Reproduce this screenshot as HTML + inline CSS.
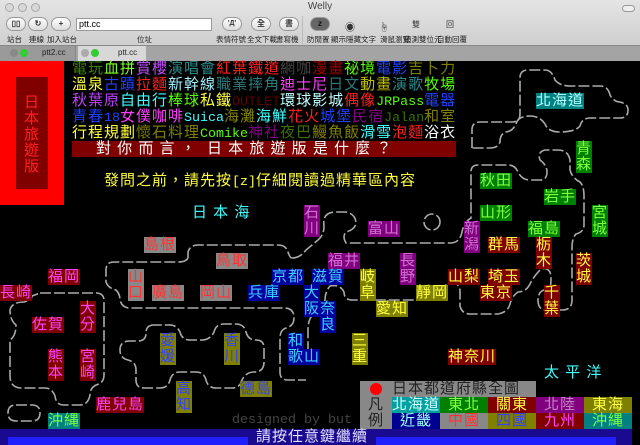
<!DOCTYPE html>
<html><head><meta charset="utf-8">
<style>
*{margin:0;padding:0;box-sizing:border-box}
body{width:640px;height:445px;overflow:hidden;background:#000;font-family:"Liberation Sans","Noto Sans CJK TC",sans-serif;position:relative}
#chrome{position:absolute;left:0;top:0;width:640px;height:61px;background:linear-gradient(#e4e4e4,#c8c8c8)}
.tl{position:absolute;top:3px;width:9px;height:9px;border-radius:50%;background:#d8d8d8;border:1px solid #a8a8a8}
.btn{position:absolute;top:17px;width:20px;height:14px;border-radius:7px;background:linear-gradient(#fff,#ddd);border:1px solid #999;font-size:8px;line-height:12px;text-align:center;color:#333;font-weight:bold}
.lb{position:absolute;top:34px;font-size:7.5px;color:#222;font-family:"Noto Sans CJK TC",sans-serif;white-space:nowrap}
.ic{position:absolute;top:19px;font-size:10px;color:#333}
#tabs{position:absolute;left:0;top:45px;width:640px;height:16px;background:#a4a4a4;border-top:1px solid #888}
.t{position:absolute;height:16px;line-height:16px;font-size:15px;letter-spacing:1px;white-space:pre;font-family:"Liberation Sans","Noto Sans CJK TC",sans-serif}
.m{font-family:"Liberation Mono",monospace;font-size:13.33px;letter-spacing:0}
.v{width:16px;height:32px}
.gr{background:#888;color:#ff3333}.pu{background:#800080;color:#d070d0}.nv{background:#0000a0;color:#40d0ff}
.ol{background:#808000;color:#ffff40}.ob{background:#808000;color:#3040ff}.dr{background:#800000;color:#ffff40}
.dm{background:#800000;color:#ff40ff}.gn{background:#008000;color:#80ff40}.tl2{background:#008080;color:#80ff40}
</style></head><body>
<div id="chrome">
 <div class="tl" style="left:5px"></div><div class="tl" style="left:18px"></div><div class="tl" style="left:31px"></div>
 <div style="position:absolute;left:0;width:640px;top:1px;text-align:center;font-size:10px;color:#444">Welly</div>
 <div style="position:absolute;left:622px;top:5px;width:13px;height:7px;border-radius:4px;border:1px solid #999;background:#eee"></div>
 <div class="btn" style="left:6px">▯▯</div><div class="btn" style="left:28px">↻</div><div class="btn" style="left:51px">+</div>
 <div class="lb" style="left:7px">站台</div><div class="lb" style="left:29px">連線</div><div class="lb" style="left:47px">加入站台</div>
 <div style="position:absolute;left:76px;top:18px;width:136px;height:13px;background:#fff;border:1px solid #999;font-size:9px;line-height:11px;padding-left:2px">ptt.cc</div>
 <div class="lb" style="left:137px">位址</div>
 <div class="btn" style="left:222px;font-size:7px">'Д'</div><div class="btn" style="left:251px">全</div><div class="btn" style="left:279px">書</div>
 <div class="lb" style="left:216px">表情符號</div><div class="lb" style="left:247px">全文下載</div><div class="lb" style="left:276px">書寫機</div>
 <div style="position:absolute;left:302px;top:16px;width:1px;height:28px;background:#bbb"></div>
 <div class="btn" style="left:310px;background:#666;color:#111">z</div>
 <div class="ic" style="left:345px">◉</div><div class="ic" style="left:379px">☝</div><div class="ic" style="left:412px;font-size:8px">雙</div><div class="ic" style="left:446px;font-size:8px">回</div>
 <div class="lb" style="left:307px">防閒置</div><div class="lb" style="left:331px">顯示隱藏文字</div><div class="lb" style="left:380px">滑鼠瀏覽</div><div class="lb" style="left:404px">偵測雙位元</div><div class="lb" style="left:437px">自動回覆</div>
</div>
<div id="tabs">
 <div style="position:absolute;left:0;top:0;width:76px;height:15px;background:#9a9a9a;border-right:1px solid #888"></div>
 <div style="position:absolute;left:78px;top:0;width:68px;height:15px;background:#d8d8d8"></div>
 <div style="position:absolute;left:10px;top:3px;width:8px;height:8px;border-radius:50%;background:#888"></div>
 <div style="position:absolute;left:20px;top:3px;width:8px;height:8px;border-radius:50%;background:#3c3"></div>
 <div style="position:absolute;left:81px;top:3px;width:8px;height:8px;border-radius:50%;background:#aaa"></div>
 <div style="position:absolute;left:91px;top:3px;width:8px;height:8px;border-radius:50%;background:#3c3"></div>
 <div style="position:absolute;left:42px;top:2px;font-size:8px;color:#222">ptt2.cc</div>
 <div style="position:absolute;left:118px;top:2px;font-size:8px;color:#222">ptt.cc</div>
</div>

<div style="position:absolute;left:0;top:61px;width:64px;height:144px;background:#ff0000"></div>
<div style="position:absolute;left:16px;top:77px;width:32px;height:112px;background:#800000"></div>
<div class="t" style="left:24px;top:95px;width:16px;line-height:16px;color:#ff2020;white-space:normal">日本旅遊版</div>

<div class="t" style="left:72px;top:61px"><span style="color:#3a8000">電玩</span><span style="color:#80ff20">血拼</span><span style="color:#c050ff">賞櫻</span><span style="color:#2a8a8a">演唱會</span><span style="color:#ff2020">紅葉鐵道</span><span style="color:#444">網咖</span><span style="color:#a00000">漫畫</span><span style="color:#55ff00">祕境</span><span style="color:#2040ff">電影</span><span style="color:#808000">吉卜力</span></div>
<div class="t" style="left:72px;top:77px"><span style="color:#ffff40">溫泉</span><span style="color:#2040ff">古蹟</span><span style="color:#ff2020">拉麵</span><span style="color:#a0f0ff">新幹線</span><span style="color:#2a7a7a">職業摔角</span><span style="color:#ff40ff">迪士尼</span><span style="color:#2a7a7a">日文</span><span style="color:#c0c000">動畫</span><span style="color:#2a8a8a">演歌</span><span style="color:#55ff00">牧場</span></div>
<div class="t" style="left:72px;top:93px"><span style="color:#c040ff">秋葉原</span><span style="color:#40ffff">自由行</span><span style="color:#55ff00">棒球</span><span style="color:#ffff40">私鐵</span><span class="m" style="color:#600000">OUTLET</span><span style="color:#c0ffff">環球影城</span><span style="color:#ff2020">偶像</span><span class="m" style="color:#55ff00">JRPass</span><span style="color:#2040ff">電器</span></div>
<div class="t" style="left:72px;top:109px"><span style="color:#2040ff">青春</span><span class="m" style="color:#2040ff">18</span><span style="color:#ff40ff">女僕咖啡</span><span class="m" style="color:#40ffff">Suica</span><span style="color:#808000">海灘</span><span style="color:#40ffff">海鮮</span><span style="color:#ff2020">花火</span><span style="color:#2040ff">城堡</span><span style="color:#800080">民宿</span><span class="m" style="color:#3a7000">Jalan</span><span style="color:#808000">和室</span></div>
<div class="t" style="left:72px;top:125px"><span style="color:#ffff40">行程規劃</span><span style="color:#808000">懷石料理</span><span class="m" style="color:#55ff00">Comike</span><span style="color:#800080">神社</span><span style="color:#3a7000">夜巴</span><span style="color:#808000">鰻魚飯</span><span style="color:#40ffff">滑雪</span><span style="color:#ff2020">泡麵</span><span style="color:#fff">浴衣</span></div>
<div class="t" style="left:72px;top:141px;width:384px;background:#800000;color:#fff;padding-left:24px">對 你 而 言 ，  日 本 旅 遊 版 是 什 麼 ？</div>
<div class="t" style="left:104px;top:173px;color:#ffff40">發問之前，請先按<span class="m">[z]</span>仔細閱讀過精華區內容</div>
<div class="t" style="left:192px;top:205px;color:#40ffff">日 本 海</div>
<div class="t" style="left:544px;top:365px;color:#40ffff">太 平 洋</div>
<div class="t m" style="left:232px;top:413px;color:#444">designed by but</div>

<svg style="position:absolute;left:0;top:0" width="640" height="445" fill="none" stroke="#aaa" stroke-width="1.6" stroke-dasharray="11 3">
<path d="M472,148 L472,130 Q472,122 480,122 L512,122 Q520,122 520,114 L520,78 Q520,70 528,70 L545,70 Q552,70 555,80 Q560,86 570,86 L600,86 Q608,86 610,95 Q614,102 620,102 Q628,104 628,110 Q628,118 620,118 L590,118 Q582,118 580,126 Q575,132 560,132 Q548,132 545,124 Q540,116 530,116 Q518,116 516,124 Q512,132 505,132 Q500,135 500,142 Q498,148 490,148 Z"/>
<path d="M292,258 Q300,258 306,250 L318,240 Q324,235 324,226 Q322,212 336,212 L346,212 Q356,214 356,224 Q354,230 346,232 Q342,236 346,243 L450,243 Q460,243 462,232 Q464,222 471,218 L471,172 Q471,165 478,165 L508,165 Q515,165 518,172 Q522,180 530,180 L540,180 Q547,180 547,172 Q547,165 540,160 Q537,152 545,150 L558,150 Q568,150 570,160 L570,170 Q572,178 580,182 Q584,186 584,196 L584,225 Q584,232 576,234 Q572,238 572,248 L572,300 Q572,310 562,310 L546,310 Q538,310 538,300 Q538,292 544,290 L550,288 Q552,280 550,272 Q546,266 540,270 Q534,276 530,284 Q526,292 518,292 Q512,296 510,304 Q508,312 498,314 L470,314 Q462,314 460,306 L460,290 Q458,282 450,282 Q444,284 444,292 Q442,300 432,300 L352,300 Q344,300 344,292 Q340,284 330,286 Q325,292 325,300 Q322,312 314,314 Q308,318 308,330 L308,360"/>
<path d="M188,258 L188,252 Q190,245 198,245 L278,245 Q286,245 288,252 Q290,258 292,258"/>
<path d="M188,258 Q186,262 178,262 L114,262 Q106,262 106,270 L106,282 Q108,288 116,290 Q120,294 120,300 Q122,308 130,308 L284,308 Q294,308 294,318 Q294,326 286,328 Q280,330 280,338 L280,372 Q280,380 288,380 L306,380"/>
<circle cx="432" cy="222" r="8"/>
<path d="M40,293 L96,293 Q104,293 104,301 L104,375 Q104,383 96,385 Q90,388 90,395 Q88,405 80,405 L64,405 Q56,405 55,396 Q52,388 45,388 L22,388 Q10,388 10,376 L10,340 Q16,336 16,325 Q10,320 10,310 Q12,302 24,302 Q32,300 32,296 Z"/>
<path d="M16,405 L32,405 Q40,405 40,413 Q40,421 32,421 L16,421 Q8,421 8,413 Q8,405 16,405 Z"/>
<path d="M154,325 Q146,325 146,333 Q146,341 138,341 L130,341 Q120,341 120,350 Q120,358 128,360 Q136,362 136,370 L136,380 Q136,388 144,388 L160,388 Q168,388 170,380 Q172,372 180,372 L196,372 Q204,372 206,380 Q208,388 216,388 L232,388 Q240,388 242,380 Q246,372 254,372 Q264,372 264,362 L264,348 Q264,340 256,340 Q248,340 246,332 Q244,324 236,324 L224,324 Q216,324 214,332 Q210,340 202,340 L190,340 Q182,340 180,332 Q176,324 168,325 Z"/>
</svg>

<div class="t gn" style="left:536px;top:93px;background:#008080;color:#b0ffff">北海道</div>
<div class="t v gn" style="left:576px;top:141px">青<br>森</div>
<div class="t gn" style="left:480px;top:173px">秋田</div>
<div class="t gn" style="left:544px;top:189px">岩手</div>
<div class="t gn" style="left:480px;top:205px">山形</div>
<div class="t v gn" style="left:592px;top:205px">宮<br>城</div>
<div class="t gn" style="left:528px;top:221px">福島</div>
<div class="t v pu" style="left:464px;top:221px">新<br>潟</div>
<div class="t v pu" style="left:304px;top:205px">石<br>川</div>
<div class="t pu" style="left:368px;top:221px">富山</div>
<div class="t dr" style="left:488px;top:237px">群馬</div>
<div class="t v dr" style="left:536px;top:237px">栃<br>木</div>
<div class="t v dr" style="left:576px;top:253px">茨<br>城</div>
<div class="t gr" style="left:144px;top:237px">島根</div>
<div class="t gr" style="left:216px;top:253px">鳥取</div>
<div class="t pu" style="left:328px;top:253px">福井</div>
<div class="t v pu" style="left:400px;top:253px">長<br>野</div>
<div class="t v gr" style="left:128px;top:269px">山<br>口</div>
<div class="t nv" style="left:272px;top:269px">京都</div>
<div class="t nv" style="left:312px;top:269px">滋賀</div>
<div class="t v ol" style="left:360px;top:269px">岐<br>阜</div>
<div class="t dr" style="left:448px;top:269px">山梨</div>
<div class="t dr" style="left:488px;top:269px">埼玉</div>
<div class="t dm" style="left:48px;top:269px">福岡</div>
<div class="t dm" style="left:0px;top:285px">長崎</div>
<div class="t gr" style="left:152px;top:285px">廣島</div>
<div class="t gr" style="left:200px;top:285px">岡山</div>
<div class="t nv" style="left:248px;top:285px">兵庫</div>
<div class="t v nv" style="left:304px;top:285px">大<br>阪</div>
<div class="t nv" style="left:320px;top:301px;width:16px;height:32px">奈<br>良</div>
<div class="t ol" style="left:416px;top:285px">靜岡</div>
<div class="t dr" style="left:480px;top:285px">東京</div>
<div class="t v dr" style="left:544px;top:285px">千<br>葉</div>
<div class="t v dm" style="left:80px;top:301px">大<br>分</div>
<div class="t dm" style="left:32px;top:317px">佐賀</div>
<div class="t ol" style="left:376px;top:301px">愛知</div>
<div class="t nv" style="left:288px;top:333px">和</div>
<div class="t nv" style="left:288px;top:349px">歌山</div>
<div class="t v ob" style="left:160px;top:333px">愛<br>媛</div>
<div class="t v ob" style="left:224px;top:333px">香<br>川</div>
<div class="t v ol" style="left:352px;top:333px">三<br>重</div>
<div class="t v dm" style="left:48px;top:349px">熊<br>本</div>
<div class="t v dm" style="left:80px;top:349px">宮<br>崎</div>
<div class="t dr" style="left:448px;top:349px">神奈川</div>
<div class="t v ob" style="left:176px;top:381px">高<br>知</div>
<div class="t ob" style="left:240px;top:381px">德島</div>
<div class="t dm" style="left:96px;top:397px">鹿兒島</div>
<div class="t tl2" style="left:48px;top:413px">沖縄</div>

<div style="position:absolute;left:360px;top:381px;width:176px;height:16px;background:#888"></div>
<div style="position:absolute;left:370px;top:383px;width:12px;height:12px;border-radius:50%;background:#f00"></div>
<div class="t" style="left:392px;top:381px;color:#222">日本都道府縣全圖</div>
<div class="t" style="left:360px;top:397px;width:32px;height:32px;background:#888;color:#222;padding-left:8px">凡<br>例</div>
<div class="t" style="left:392px;top:397px;width:48px;background:#00a0a0;color:#d0ffff">北海道</div>
<div class="t gn" style="left:440px;top:397px;width:48px;padding-left:8px">東北</div>
<div class="t dr" style="left:488px;top:397px;width:48px;padding-left:8px">關東</div>
<div class="t" style="left:536px;top:397px;width:48px;padding-left:8px;background:#800080;color:#c080c0">北陸</div>
<div class="t ol" style="left:584px;top:397px;width:48px;padding-left:8px">東海</div>
<div class="t" style="left:392px;top:413px;width:48px;padding-left:8px;background:#000090;color:#a0ffff">近畿</div>
<div class="t gr" style="left:440px;top:413px;width:48px;padding-left:8px">中國</div>
<div class="t ob" style="left:488px;top:413px;width:48px;padding-left:8px">四國</div>
<div class="t dm" style="left:536px;top:413px;width:48px;padding-left:8px">九州</div>
<div class="t tl2" style="left:584px;top:413px;width:48px;padding-left:8px">沖縄</div>

<div style="position:absolute;left:0;top:429px;width:632px;height:16px;background:#1a0a90"></div>
<div style="position:absolute;left:8px;top:437px;width:240px;height:8px;background:#2020ff"></div>
<div style="position:absolute;left:376px;top:437px;width:240px;height:8px;background:#2020ff"></div>
<div class="t" style="left:256px;top:429px;color:#e0e0ff">請按任意鍵繼續</div>
</body></html>
